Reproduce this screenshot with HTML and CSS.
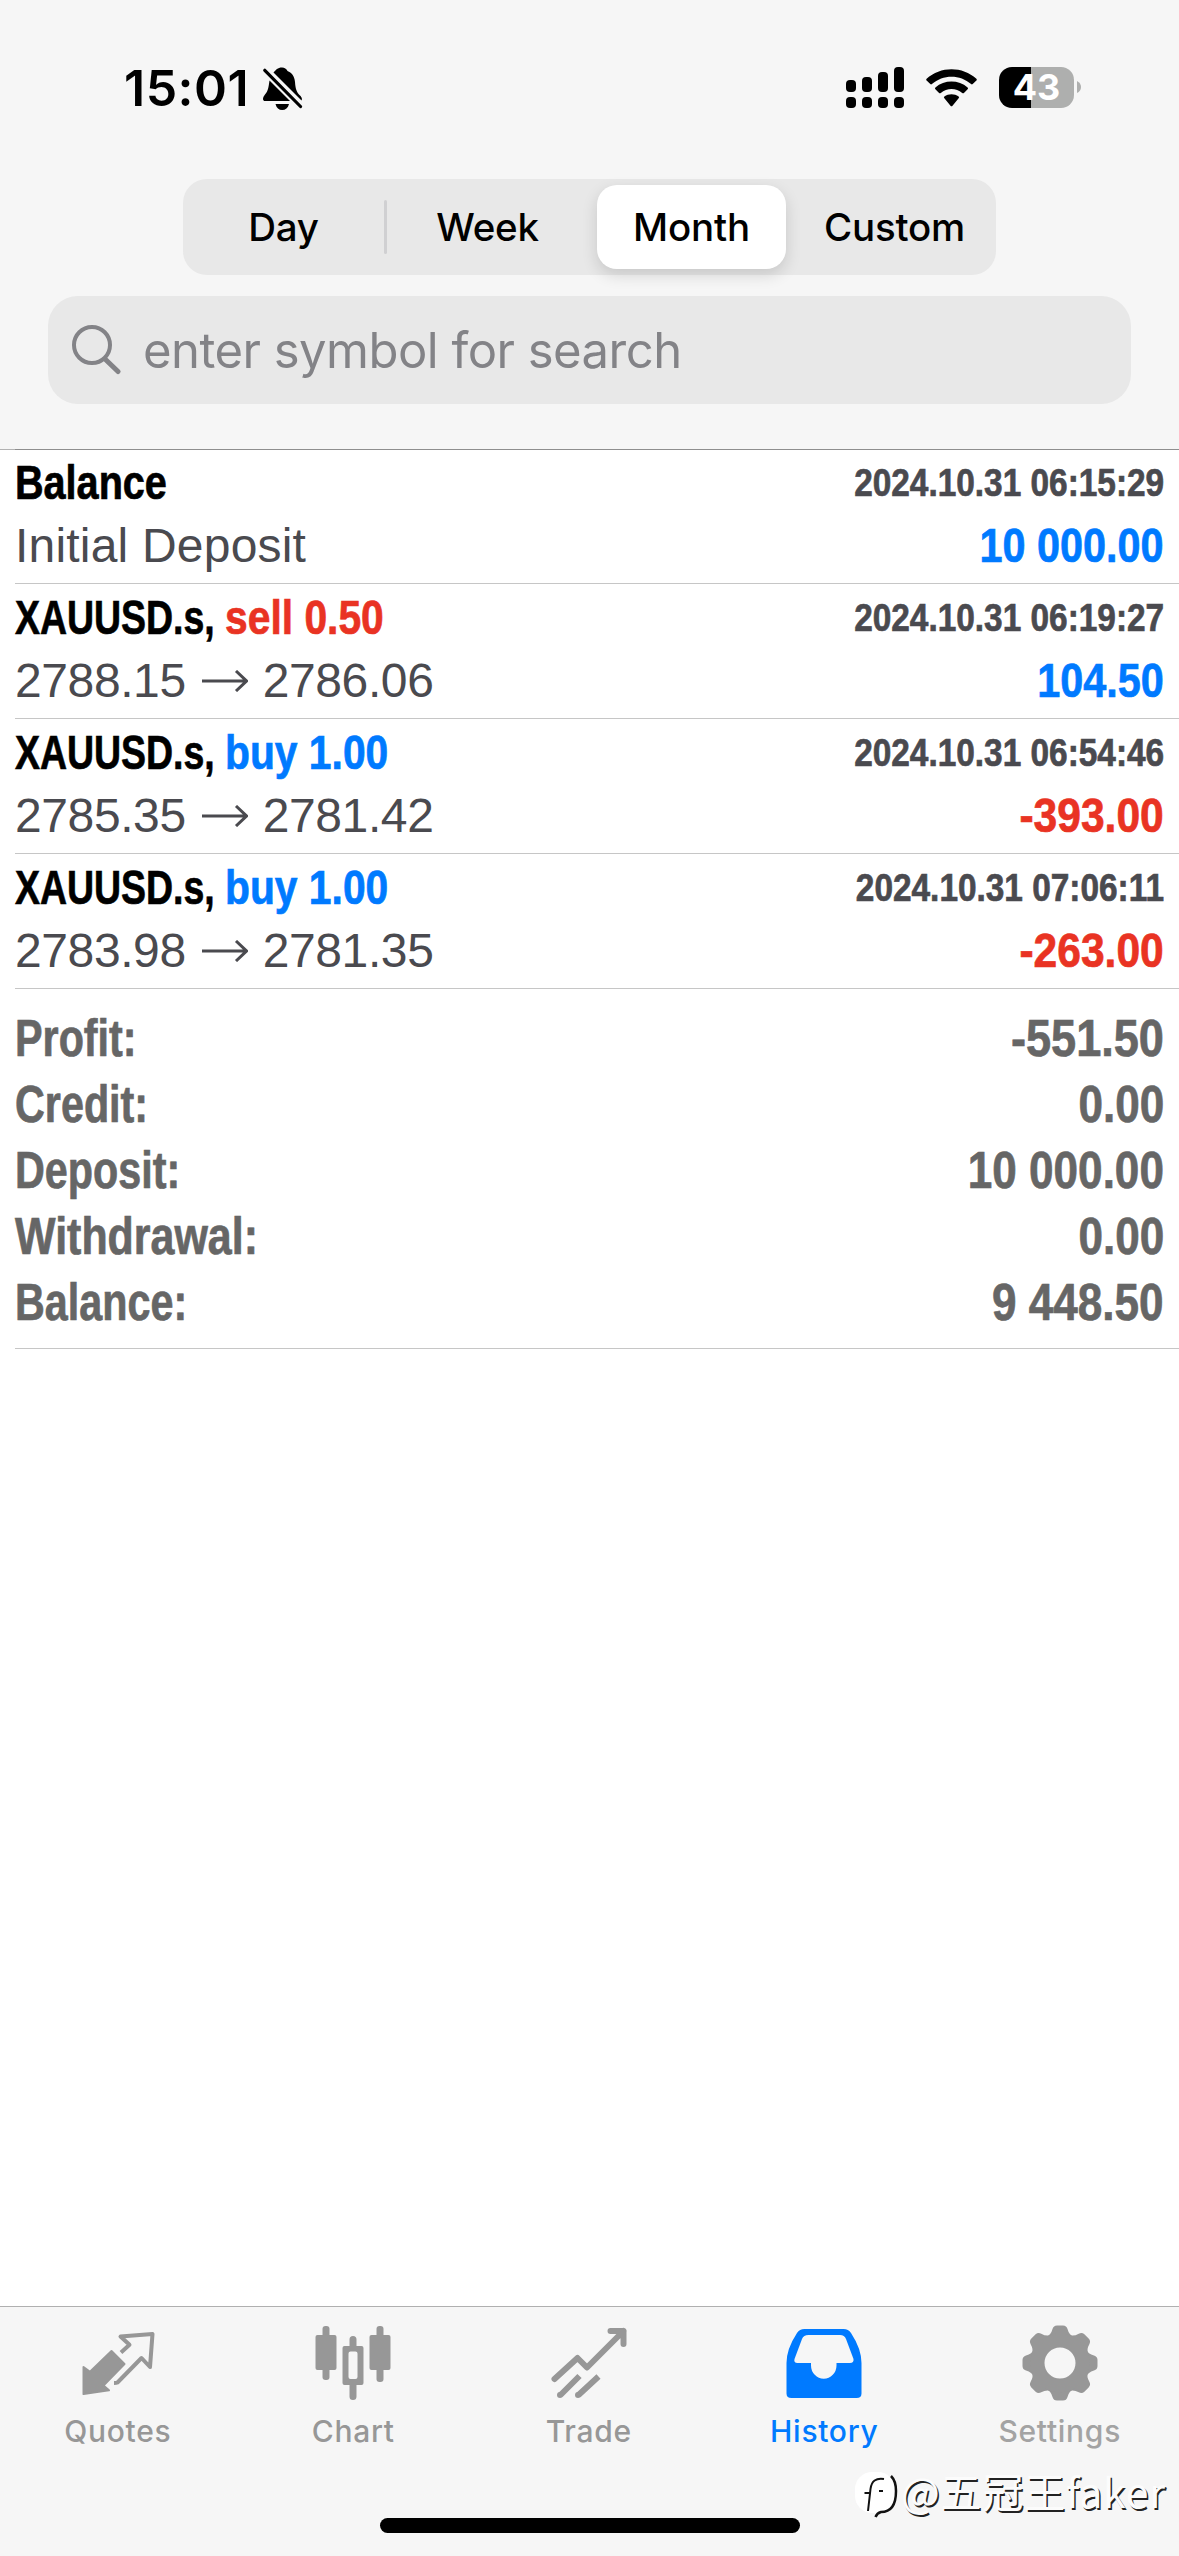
FILE: index.html
```html
<!DOCTYPE html>
<html lang="en">
<head>
<meta charset="utf-8">
<title>History</title>
<link rel="stylesheet" href="styles.css">
</head>
<body>
<div class="screen">
  <header class="header">
    <div class="status">
      <div class="status-left">
        <span class="time">15:01</span>
        <svg class="bell" viewBox="0 0 40 44"><path d="M19 0.500C14.500 0.500 13 3 10.500 5.500L38.500 33.500C39.500 31.500 38.500 30 37 28.500C33.500 25 32.500 22 32 15C31.500 9 28.500 5.500 24.500 4C23.500 1.800 21.500 .5 19 .5ZM6.500 13.500C5.500 21 5 24 2 27.500C-.5 30.500-1 34 2.500 34H27ZM12.500 37H26C25 41 22.500 43 19.200 43S13.500 41 12.500 37Z"/><path d="M1.800 3.300L37.500 39.500" stroke="#000" stroke-width="3.200" stroke-linecap="round"/></svg>
      </div>
      <div class="status-right">
        <svg class="signal" viewBox="0 0 58 42"><rect y="13" width="10" height="12" rx="4"/><rect x="16" y="10" width="10" height="15" rx="4"/><rect x="32" y="5" width="10" height="20" rx="4"/><rect x="48" width="10" height="25" rx="4"/><rect y="30" width="10" height="11" rx="4"/><rect x="16" y="30" width="10" height="11" rx="4"/><rect x="32" y="30" width="10" height="11" rx="4"/><rect x="48" y="30" width="10" height="11" rx="4"/></svg>
        <svg class="wifi" viewBox="0 0 50 37"><path d="M.6 9.400C14-3.100 36-3.100 49.400 9.400Q50.200 10.300 49.400 11.200L45.800 14.700Q45 15.400 44.200 14.700C33.500 5 16.500 5 5.800 14.700Q5 15.400 4.200 14.700L.6 11.200Q-.2 10.300.6 9.400Z"/><path d="M9.200 18C18 10.200 32 10.200 40.800 18Q41.700 18.900 40.800 19.800L37.200 23.300Q36.400 24 35.500 23.300C29.500 18.300 20.500 18.300 14.500 23.300Q13.600 24 12.800 23.300L9.200 19.800Q8.300 18.900 9.200 18Z"/><path d="M18 26.800C22 23.900 28 23.900 32 26.800Q33 27.600 32 28.600L26 35.800Q25 36.900 24 35.800L18 28.600Q17 27.600 18 26.800Z"/></svg>
        <div class="battery"><span>43</span></div>
        <svg class="battery-cap" viewBox="0 0 4 12"><path d="M0 0Q4 2 4 6T0 12Z" fill="#aeafae"/></svg>
      </div>
    </div>
    <nav class="segments">
      <span class="segment segment-start">Day</span>
      <span class="segment segment-start segment-divided">Week</span>
      <span class="segment segment-active">Month</span>
      <span class="segment segment-end">Custom</span>
    </nav>
    <div class="search">
      <svg class="search-icon" viewBox="0 0 50 50"><circle cx="20" cy="20" r="18" fill="none" stroke="#838387" stroke-width="4"/><path d="M33 34L46 46.500" stroke="#838387" stroke-width="5" stroke-linecap="round"/></svg>
      <span class="search-text">enter symbol for search</span>
    </div>
  </header>

  <main class="content">
    <section class="deals">
      <article class="deal">
        <div class="line"><b class="title">Balance</b><b class="date">2024.10.31 06:15:29</b></div>
        <div class="line"><span class="detail comment">Initial Deposit</span><b class="amount blue">10 000.00</b></div>
      </article>
      <article class="deal">
        <div class="line"><b class="symbol">XAUUSD.s,</b><b class="side red">sell 0.50</b><b class="date">2024.10.31 06:19:27</b></div>
        <div class="line"><span class="detail">2788.15</span><svg class="arrow" viewBox="0 0 46 22"><path d="M0 11H44M34 1L44.500 11L34 21"/></svg><span class="detail">2786.06</span><b class="amount blue">104.50</b></div>
      </article>
      <article class="deal">
        <div class="line"><b class="symbol">XAUUSD.s,</b><b class="side blue">buy 1.00</b><b class="date">2024.10.31 06:54:46</b></div>
        <div class="line"><span class="detail">2785.35</span><svg class="arrow" viewBox="0 0 46 22"><path d="M0 11H44M34 1L44.500 11L34 21"/></svg><span class="detail">2781.42</span><b class="amount loss red">-393.00</b></div>
      </article>
      <article class="deal">
        <div class="line"><b class="symbol">XAUUSD.s,</b><b class="side blue">buy 1.00</b><b class="date">2024.10.31 07:06:11</b></div>
        <div class="line"><span class="detail">2783.98</span><svg class="arrow" viewBox="0 0 46 22"><path d="M0 11H44M34 1L44.500 11L34 21"/></svg><span class="detail">2781.35</span><b class="amount loss red">-263.00</b></div>
      </article>
    </section>
    <section class="summary">
      <div class="total"><b>Profit:</b><b class="value loss">-551.50</b></div>
      <div class="total"><b>Credit:</b><b class="value">0.00</b></div>
      <div class="total"><b>Deposit:</b><b class="value">10 000.00</b></div>
      <div class="total"><b class="wide">Withdrawal:</b><b class="value">0.00</b></div>
      <div class="total"><b>Balance:</b><b class="value">9 448.50</b></div>
    </section>
  </main>

  <footer class="tabbar">
    <nav class="tabs">
      <div class="tab">
        <svg viewBox="77.500 2323 80 80"><path fill="#979797" stroke="#979797" stroke-width="2" stroke-linejoin="round" d="M83 2367L89.500 2371.800L111 2351L124 2364L103 2385.500L108.500 2390.300L83 2394Z"/><path fill="none" stroke="#979797" stroke-width="4" stroke-linejoin="round" d="M120.500 2352.500L129 2344.800L120 2336.500L152 2334L149.500 2367L141 2358L117 2382.500Q116 2383 113.500 2383"/></svg>
        <span>Quotes</span>
      </div>
      <div class="tab">
        <svg viewBox="313.500 2323 80 80"><g fill="#979797"><rect x="323" y="2326" width="7" height="54" rx="3"/><rect x="316" y="2335" width="21" height="35" rx="2"/><path fill-rule="evenodd" d="M350 2346V2339.500A3.500 3.500 0 0 1 357 2339.500V2346H362Q364 2346 364 2348V2383Q364 2385 362 2385H357V2396.500A3.500 3.500 0 0 1 350 2396.500V2385H345Q343 2385 343 2383V2348Q343 2346 345 2346ZM351 2351.500Q349 2351.500 349 2353.500V2377Q349 2379 351 2379H356Q358 2379 358 2377V2353.500Q358 2351.500 356 2351.500Z"/><rect x="377" y="2326" width="7" height="56" rx="3"/><rect x="370" y="2335" width="21" height="35" rx="2"/></g></svg>
        <span>Chart</span>
      </div>
      <div class="tab">
        <svg viewBox="549.500 2323 80 80"><g fill="none" stroke="#979797" stroke-width="6" stroke-linejoin="round"><path stroke-linecap="round" d="M555 2379L578 2358L587.500 2367.500L624 2331M611 2331H624V2344"/><path d="M561 2395L580 2376M579 2395L599 2376.500"/></g><g fill="#979797"><circle cx="560.500" cy="2395" r="3"/><circle cx="578.500" cy="2395" r="3"/></g></svg>
        <span>Trade</span>
      </div>
      <div class="tab tab-active">
        <svg viewBox="783.500 2323 80 80"><path fill="#007aff" fill-rule="evenodd" d="M804 2329H843Q848 2329 850.500 2333Q861 2349 861 2363V2393.500Q861 2398 856 2398H791Q786 2398 786 2393.500V2363Q786 2349 796.500 2333Q799 2329 804 2329ZM808 2335Q803 2335 801.500 2339L794 2359Q793 2363 797 2363H810.500V2365.500A12.700 13.200 0 0 0 836 2365.500V2363H849.500Q853.500 2363 853 2359L845.500 2339Q844 2335 839.500 2335Z"/></svg>
        <span>History</span>
      </div>
      <div class="tab tab-light">
        <svg viewBox="-40 -40 80 80"><defs><path id="tooth" d="M-14 -26Q-9 -28 -7.500 -34Q-6.500 -37.500 -3 -37.500H3Q6.500 -37.500 7.500 -34Q9 -28 14 -26Z"/></defs><g fill="#979797"><use href="#tooth"/><use href="#tooth" transform="rotate(45)"/><use href="#tooth" transform="rotate(90)"/><use href="#tooth" transform="rotate(135)"/><use href="#tooth" transform="rotate(180)"/><use href="#tooth" transform="rotate(225)"/><use href="#tooth" transform="rotate(270)"/><use href="#tooth" transform="rotate(315)"/></g><circle r="22.500" fill="none" stroke="#979797" stroke-width="14"/></svg>
        <span>Settings</span>
      </div>
    </nav>
    <div class="home"></div>
    <div class="watermark">
      <svg viewBox="0 0 44 48"><rect width="40" height="41" rx="17" fill="#fff"/><g fill="none" stroke="#111" stroke-width="2"><path d="M29 7Q17 5 15.500 17L13 39M9.500 21H15M24 19H28"/><path stroke-width="2.500" d="M36 4Q41 9 41 19Q41 40 26 40Q22 41 20.500 45"/></g></svg>
      <span>@五冠王faker</span>
    </div>
  </footer>
</div>
</body>
</html>
```
FILE: styles.css
```css
* { box-sizing: border-box; }
body { margin: 0; background: #fff; }
.screen { width: 1179px; height: 2556px; display: flex; flex-direction: column; overflow: hidden; font-family: Inter, "Liberation Sans", sans-serif; color: #000; }
svg { display: block; flex: none; }

.header { height: 450px; background: linear-gradient(90deg, #b2b2b2 15px, #8e8e8e 15px) bottom / 100% 1px no-repeat, #f6f6f6; }
.status { height: 179px; padding: 67px 98px 0 124px; display: flex; justify-content: space-between; align-items: flex-start; }
.status-left, .status-right { display: flex; }
.time { width: 139px; font-size: 50px; font-weight: 600; line-height: 42px; letter-spacing: .5px; white-space: nowrap; }
.bell { width: 40px; height: 44px; }
.signal { width: 58px; height: 42px; margin-right: 22px; }
.wifi { width: 51px; height: 38px; margin: 2px 22px 0 0; }
.battery { width: 75px; height: 41px; border-radius: 13px; background: linear-gradient(90deg, #000 32px, #aeafae 32px); color: #fff; font-size: 36px; font-weight: 700; line-height: 41px; text-align: center; }
.battery-cap { width: 4px; height: 12px; margin: 14px 0 0 3px; }

.segments { width: 813px; height: 96px; margin-left: 183px; padding: 6px; border-radius: 24px; background: #e8e8e8; display: grid; grid-template-columns: 198px 210px 189px 1fr; }
.segment { display: flex; align-items: center; justify-content: center; font-size: 38.5px; font-weight: 450; letter-spacing: -.2px; }
.segment-start { padding-right: 9px; }
.segment-end { padding-left: 13px; }
.segment-divided { position: relative; }
.segment-divided::before { content: ""; position: absolute; left: -3px; top: 15px; width: 3px; height: 54px; border-radius: 2px; background: #d0d0d2; }
.segment-active { background: #fff; border-radius: 20px; font-weight: 550; box-shadow: 0 6px 16px rgba(0, 0, 0, .14); }

.search { width: 1083px; height: 108px; margin: 21px 0 0 48px; padding-left: 24px; border-radius: 30px; background: #e8e8e8; display: flex; align-items: center; }
.search-icon { width: 50px; height: 50px; margin-right: 21px; }
.search-text { font-size: 49px; letter-spacing: -.52px; color: #838387; white-space: nowrap; }

.content { flex: 1; padding-left: 15px; font-family: "Liberation Sans", Arial, sans-serif; }
.content b { -webkit-text-stroke: .7px currentColor; }
.deal { height: 135px; padding: 2px 15px 0 0; border-bottom: 1px solid #c6c6c6; }
.deal:first-child { height: 134px; padding-top: 1px; }
.line { display: flex; height: 63px; line-height: 63px; white-space: nowrap; font-size: 48px; }
.title, .symbol, .side, .total b { transform-origin: left; }
.title { transform: scaleX(.825); }
.symbol { width: 210px; transform: scaleX(.78); }
.side { transform: scaleX(.85); }
.date, .amount { margin-left: auto; transform-origin: right; }
.date { font-size: 39px; color: #4a4a4f; transform: scaleX(.856); }
.amount { transform: scaleX(.862); }
.amount.loss { transform: scaleX(.887); }
.detail { color: #4a4a4f; letter-spacing: -.4px; }
.comment { letter-spacing: .2px; }
.arrow { width: 46px; height: 22px; margin: 21px 15px 0 16px; fill: none; stroke: #4a4a4f; stroke-width: 3; }
.blue { color: #007aff; }
.red { color: #e93323; }
.summary { height: 360px; padding: 17px 15px 0 0; border-bottom: 1px solid #c6c6c6; }
.total { height: 66px; line-height: 66px; display: flex; justify-content: space-between; font-size: 51px; color: #666; white-space: nowrap; }
.total b { transform: scaleX(.81); }
.total .wide { transform: scaleX(.842); }
.total .value { transform-origin: right; transform: scaleX(.864); }
.total .value.loss { transform: scaleX(.885); }

.tabbar { position: relative; height: 250px; background: #f6f6f6; border-top: 1px solid #b0b0b0; }
.tabs { display: grid; grid-template-columns: repeat(5, 235.5px); padding-top: 16px; }
.tab { display: flex; flex-direction: column; align-items: center; color: #979797; font-size: 30px; font-weight: 450; letter-spacing: .7px; }
.tab svg { width: 80px; height: 80px; }
.tab span { line-height: 36px; margin-top: 10px; }
.tab-active { color: #007aff; }
.tab-light { color: #a3a3a3; }
.home { width: 420px; height: 15px; border-radius: 8px; background: #000; margin: 69px auto 0; }
.watermark { position: absolute; left: 855px; top: 165px; display: flex; white-space: nowrap; font-family: "Noto Sans CJK SC", sans-serif; font-size: 41px; line-height: 48px; letter-spacing: .8px; color: #fcfcfc; text-shadow: 1.5px 1.5px 0 #222; }
.watermark span { margin: -6px 0 0 2px; }
.watermark svg { width: 44px; height: 48px; }
```
